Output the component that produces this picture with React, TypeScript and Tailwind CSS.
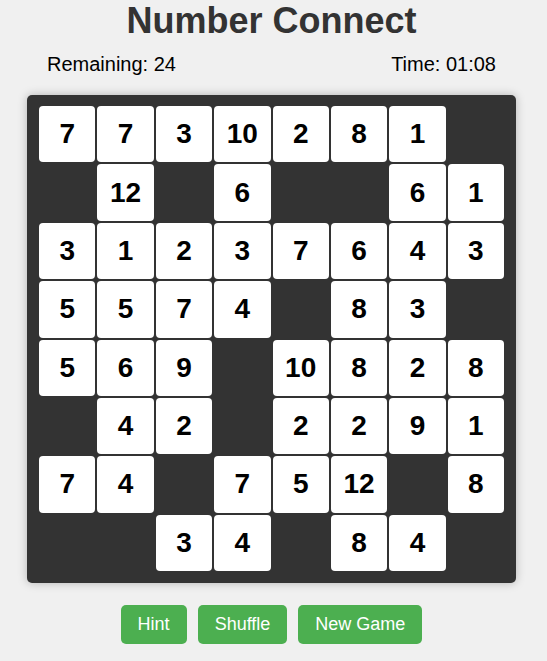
import { useState } from "react";

type Cell = number | null;

const BOARD: Cell[][] = [
  [7, 7, 3, 10, 2, 8, 1, null],
  [null, 12, null, 6, null, null, 6, 1],
  [3, 1, 2, 3, 7, 6, 4, 3],
  [5, 5, 7, 4, null, 8, 3, null],
  [5, 6, 9, null, 10, 8, 2, 8],
  [null, 4, 2, null, 2, 2, 9, 1],
  [7, 4, null, 7, 5, 12, null, 8],
  [null, null, 3, 4, null, 8, 4, null],
];

function Tile({ value }: { value: Cell }) {
  if (value === null) return <div className="aspect-square" />;
  return (
    <div className="aspect-square rounded-[4px] bg-white flex items-center justify-center text-[28px] font-bold text-black cursor-pointer select-none">
      {value}
    </div>
  );
}

export default function App() {
  const [board] = useState(BOARD);
  const remaining = board.flat().filter((v) => v !== null).length / 2;

  return (
    <div
      className="min-h-[661px] w-full bg-[#f0f0f0]"
      style={{ fontFamily: '"Liberation Sans", Arial, sans-serif' }}
    >
      <div className="ml-[27px] w-[489px] flex flex-col">
        {/* Title */}
        <h1 className="text-center text-[36px] leading-[41px] font-bold text-[#333]">
          Number Connect
        </h1>

        {/* Stats */}
        <div className="mt-[12px] flex justify-between px-[20px] text-[20px] leading-[23px] text-black">
          <span>Remaining: {remaining}</span>
          <span>Time: 01:08</span>
        </div>

        {/* Board */}
        <div className="mt-[19px] rounded-[5px] bg-[#333] px-[12px] pt-[11px] pb-[12px] shadow-[0_0_10px_rgba(0,0,0,0.25)]">
          <div className="grid grid-cols-8 gap-[2px]">
            {board.flat().map((v, i) => (
              <Tile key={i} value={v} />
            ))}
          </div>
        </div>

        {/* Controls */}
        <div className="mt-[22px] flex justify-center gap-[11px]">
          {["Hint", "Shuffle", "New Game"].map((label) => (
            <button
              key={label}
              className="rounded-[5px] bg-[#4caf50] px-[17px] py-[9px] text-[18px] leading-[21px] text-white"
            >
              {label}
            </button>
          ))}
        </div>
      </div>
    </div>
  );
}
